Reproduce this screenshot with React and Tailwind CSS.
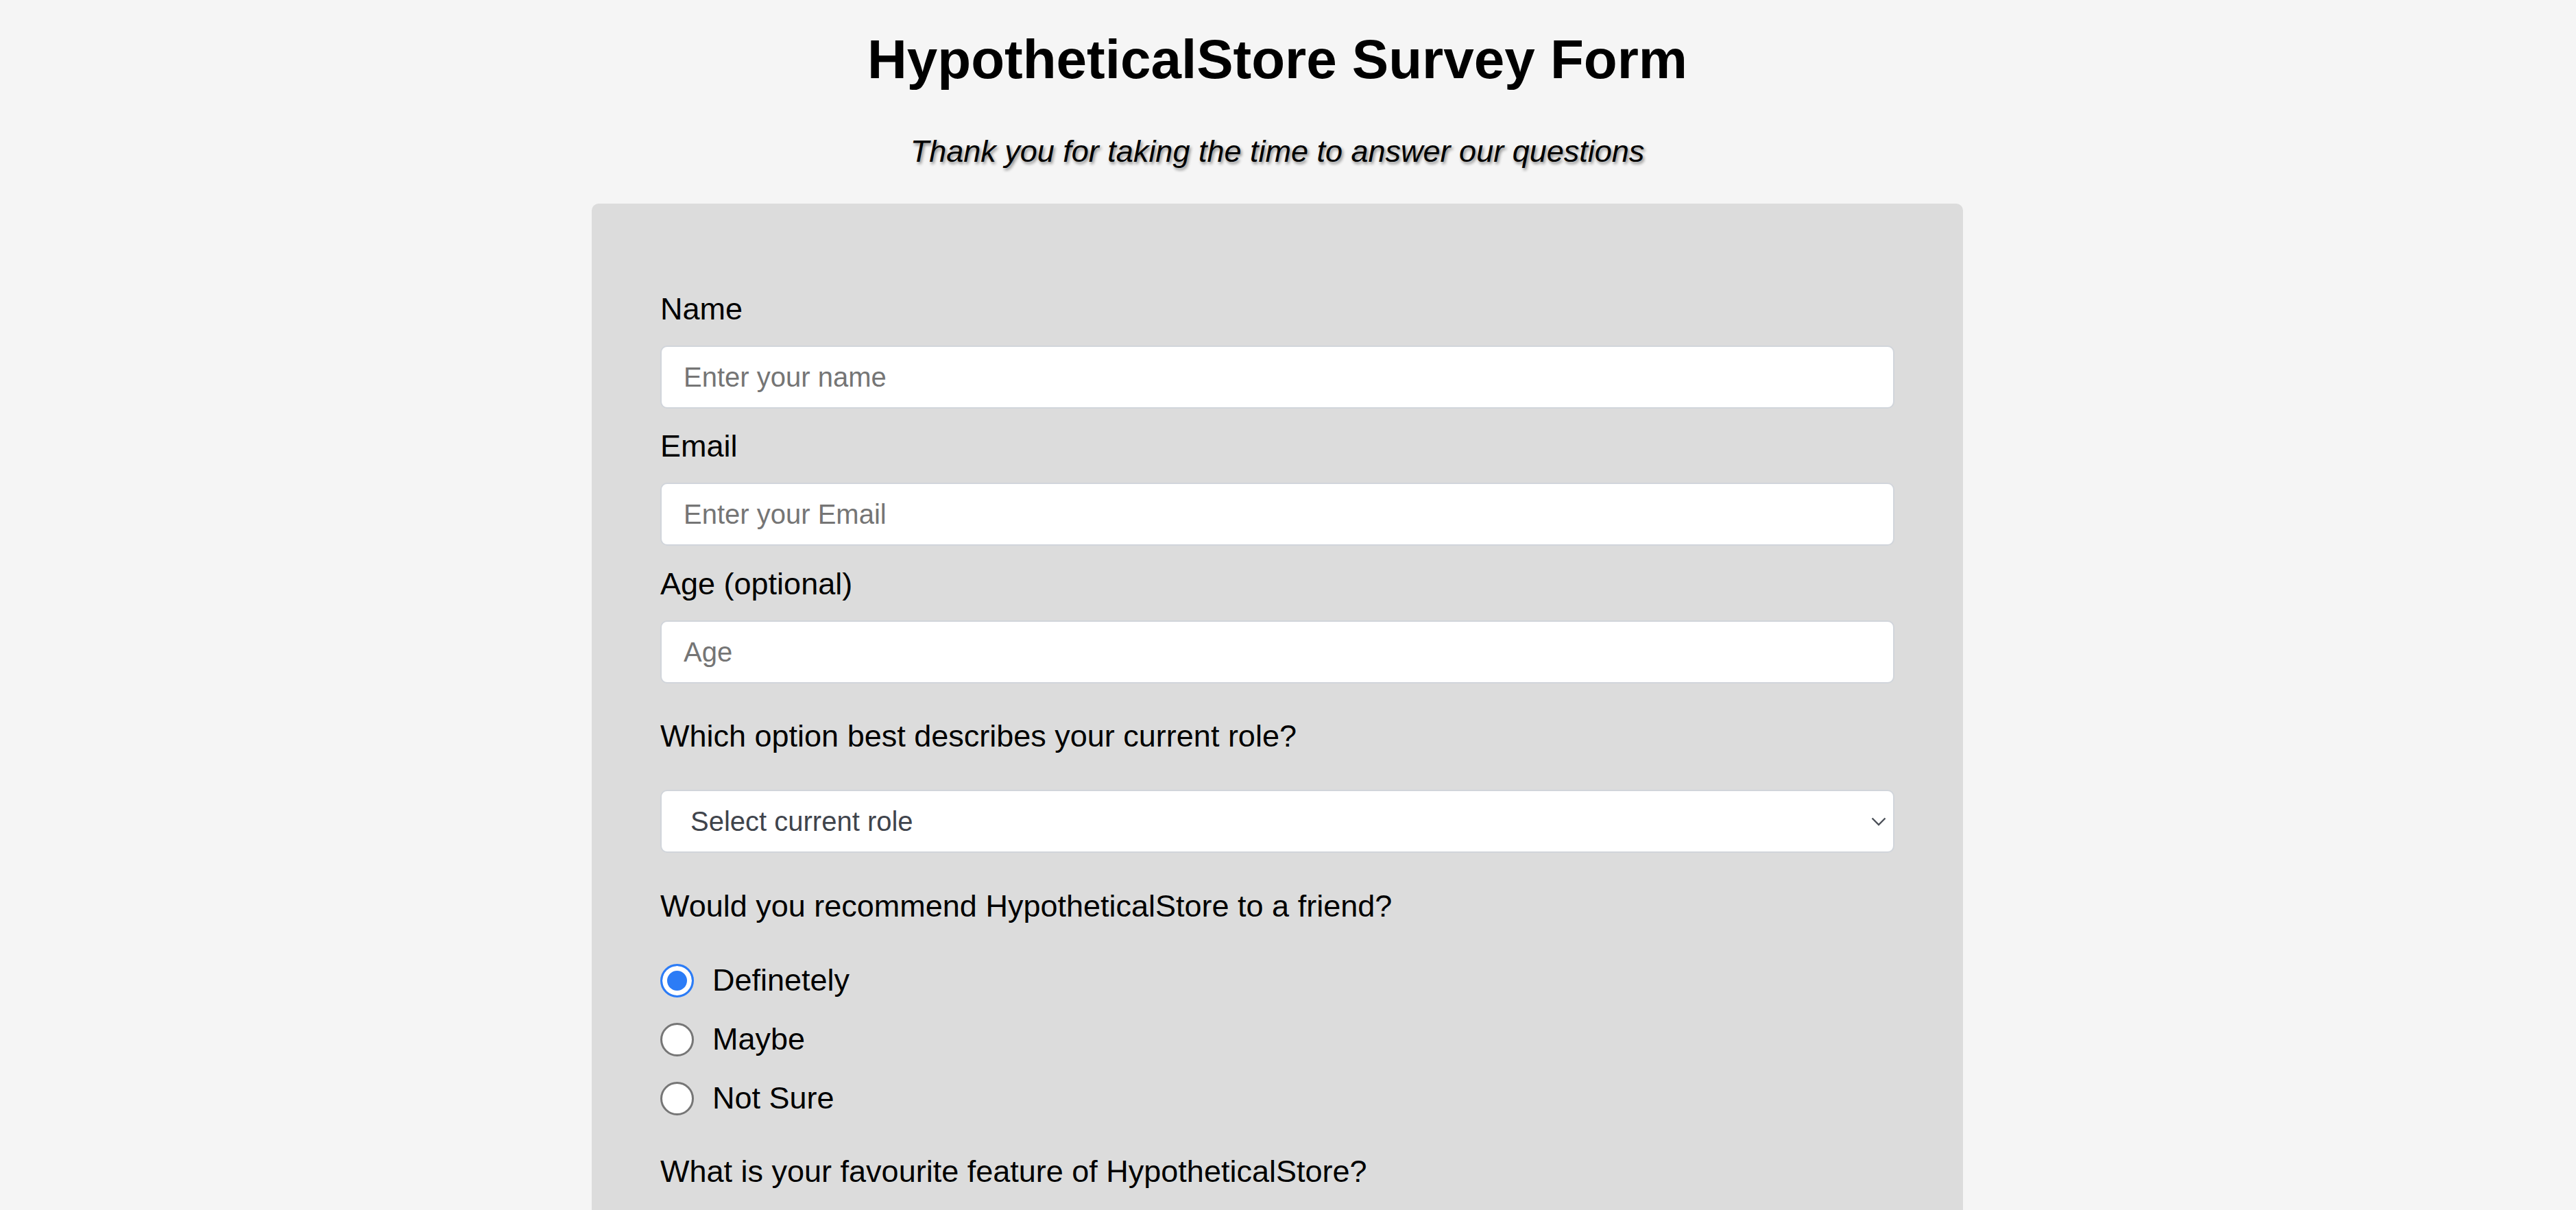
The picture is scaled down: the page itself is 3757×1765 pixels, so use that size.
import React from 'react';

const roles = ['Student', 'Full Time Job', 'Full Time Learner', 'Prefer not to say', 'Other'];
const recommend = ['Definetely', 'Maybe', 'Not Sure'];

function Field({ id, label, type = 'text', placeholder }) {
  return (
    <>
      <label htmlFor={id} className="block text-[45px] leading-[52px] text-black">
        {label}
      </label>
      <input
        id={id}
        type={type}
        placeholder={placeholder}
        className="mt-[27px] block w-full h-[92px] rounded-[10px] border-2 border-[#d1d5db] bg-white px-[32px] text-[40px] text-black placeholder:text-[#757575] outline-none"
      />
    </>
  );
}

function Dropdown({ id, placeholder, options }) {
  return (
    <div className="relative mt-[52px]">
      <select
        id={id}
        defaultValue=""
        className="appearance-none block w-full h-[92px] rounded-[10px] border-2 border-[#d1d5db] bg-white pl-[42px] pr-[60px] text-[40px] text-[#3f444c] outline-none"
      >
        <option value="" disabled>{placeholder}</option>
        {options.map((o) => (
          <option key={o} value={o}>{o}</option>
        ))}
      </select>
      {/* native-looking chevron */}
      <svg
        className="pointer-events-none absolute right-[12px] top-[40px]"
        width="22"
        height="13"
        viewBox="0 0 22 13"
        fill="none"
      >
        <path d="M1.5 1.5 L11 11 L20.5 1.5" stroke="#4b5058" strokeWidth="2.4" />
      </svg>
    </div>
  );
}

export default function App() {
  const [choice, setChoice] = React.useState('Definetely');

  return (
    <div className="min-h-screen bg-[#f5f5f5] pr-[31px] pt-[41px] font-['Liberation_Sans',Arial,sans-serif] text-black">
      <h1 className="text-center text-[80px] leading-[92px] font-bold">HypotheticalStore Survey Form</h1>
      <p className="mt-[62px] text-center text-[45px] leading-[52px] italic [text-shadow:2px_3px_4px_rgba(0,0,0,0.45)]">
        Thank you for taking the time to answer our questions
      </p>

      <form className="mx-auto mt-[50px] w-[2000px] rounded-t-[10px] bg-[#dcdcdc] px-[100px] pt-[128px] pb-[100px]">
        <Field id="name" label="Name" placeholder="Enter your name" />
        <div className="mt-[29px]">
          <Field id="email" label="Email" type="email" placeholder="Enter your Email" />
        </div>
        <div className="mt-[30px]">
          <Field id="age" label="Age (optional)" type="number" placeholder="Age" />
        </div>

        <p className="mt-[51px] text-[45px] leading-[52px]">Which option best describes your current role?</p>
        <Dropdown id="role" placeholder="Select current role" options={roles} />

        <p className="mt-[52px] text-[45px] leading-[52px]">Would you recommend HypotheticalStore to a friend?</p>
        <div className="mt-[39px]">
          {recommend.map((r) => (
            <label key={r} className="flex h-[86px] items-center gap-[27px] text-[45px] leading-[52px]">
              <input
                type="radio"
                name="recommend"
                checked={choice === r}
                onChange={() => setChoice(r)}
                className="appearance-none m-0 h-[49px] w-[49px] shrink-0 rounded-full border-[3px] border-[#767676] bg-white checked:border-[#2c7cf6] checked:bg-[#2c7cf6] checked:shadow-[inset_0_0_0_7px_white]"
              />
              {r}
            </label>
          ))}
        </div>

        <p className="mt-[38px] text-[45px] leading-[52px]">What is your favourite feature of HypotheticalStore?</p>
      </form>
    </div>
  );
}
